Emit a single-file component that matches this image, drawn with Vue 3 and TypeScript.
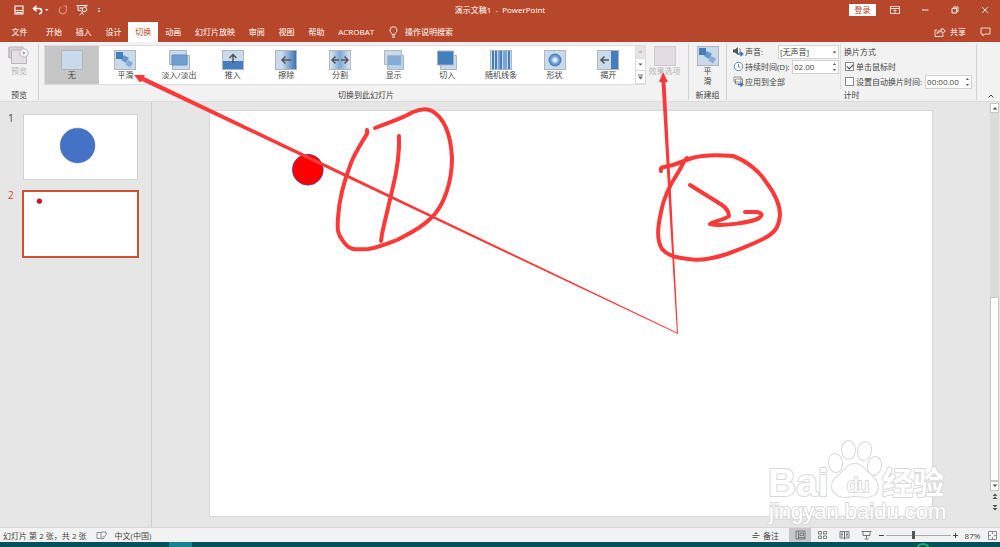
<script setup lang="ts">
import { ref } from 'vue'

const tabs: string[] = ['开始', '插入', '设计', '切换', '动画', '幻灯片放映', '审阅', '视图', '帮助', 'ACROBAT']
const activeTab = ref('切换')

interface Transition { id: string; name: string }
const transitions: Transition[] = [
  { id: 'none', name: '无' },
  { id: 'morph', name: '平滑' },
  { id: 'fade', name: '淡入/淡出' },
  { id: 'push', name: '推入' },
  { id: 'wipe', name: '擦除' },
  { id: 'split', name: '分割' },
  { id: 'reveal', name: '显示' },
  { id: 'cut', name: '切入' },
  { id: 'bars', name: '随机线条' },
  { id: 'shape', name: '形状' },
  { id: 'uncover', name: '揭开' },
]
const selected = ref('none')
const sound = ref('[无声音]')
const duration = ref('02.00')
const after = ref('00:00.00')
const onClick = ref(true)
const auto = ref(false)
const zoom = ref(42)
</script>

<template>
  <div class="app">
    <header class="head">
      <div class="titlebar">
        <div class="quick">
          <button aria-label="保存"><svg width="10" height="10" viewBox="0 0 10 10"><path d="M1 1h8v8H1zM1 5.500h8M3 9V7.500h4V9" fill="none" stroke="#fff" stroke-width="1.100" /></svg></button>
          <button class="undo" aria-label="撤消"><svg width="18" height="10" viewBox="0 0 18 10"><path d="M1.500 3.500H7c3.500 0 3.500 5 0 5.200M4.500 .8 1.500 3.500l3 2.800" fill="none" stroke="#fff" stroke-width="1.500" /><path d="M13 4h3.500l-1.700 2z" fill="#fff" /></svg></button>
          <button aria-label="恢复"><svg width="10" height="10" viewBox="0 0 10 10"><path d="M3.200 2A3.600 3.600 0 1 0 8 3.500M5.500 1H8.500V4" fill="none" stroke="#d98d7a" stroke-width="1.200" /></svg></button>
          <button aria-label="从头开始"><svg width="12" height="12" viewBox="0 0 12 12"><path d="M.5 1.500h11M2 1.500v5h3M10 1.500v2M6 7v2.500M3.500 11 6 9l2 2M3.500 4h3" fill="none" stroke="#fff" /><circle cx="8.500" cy="5.500" r="2.200" fill="#b7472a" stroke="#fff" /></svg></button>
          <button aria-label="自定义快速访问工具栏"><svg width="6" height="8" viewBox="0 0 6 8"><path d="M2 2.500h2M2 5h2L3 6z" stroke="#fff" stroke-width=".8" fill="#fff" /></svg></button>
        </div>
        <div class="title">演示文稿1&nbsp; - &nbsp;PowerPoint</div>
        <div class="window">
          <button class="login">登录</button>
          <button aria-label="功能区显示选项"><svg width="10" height="10" viewBox="0 0 10 10"><path d="M.5 1.500h9v7h-9zM.5 3.500h9M5 8V5M3.500 6 5 4.500 6.500 6" fill="none" stroke="#fff" stroke-width=".8" /></svg></button>
          <button aria-label="最小化"><svg width="10" height="10" viewBox="0 0 10 10"><path d="M2 5h6.500" stroke="#fff" stroke-width=".9" /></svg></button>
          <button aria-label="向下还原"><svg width="10" height="10" viewBox="0 0 10 10"><path d="M2 3.500h4.500V8H2zM3.500 3.500V2H8v4.500H6.500" fill="none" stroke="#fff" stroke-width=".9" /></svg></button>
          <button aria-label="关闭"><svg width="10" height="10" viewBox="0 0 10 10"><path d="m2 2 6 6M8 2 2 8" stroke="#fff" stroke-width=".9" /></svg></button>
        </div>
      </div>
      <div class="tabbar">
        <button class="file">文件</button>
        <nav class="tabs">
          <button v-for="t in tabs" :key="t" :class="{ on: t === activeTab }" @click="activeTab = t">{{ t }}</button>
        </nav>
        <button class="tell"><svg width="9" height="12" viewBox="0 0 9 12"><path d="M3 8.500C3 7 1 6 1 4.200a3.400 3.400 0 0 1 7 0C8 6 6 7 6 8.500zM3 10h3M3.500 11.500h2" fill="none" stroke="#fff" stroke-width=".9" /></svg>操作说明搜索</button>
        <button class="share"><svg width="12" height="10" viewBox="0 0 12 10"><path d="M3 3H1v6.500h8V7M3 7c0-3 2-4 5-4V1l3.500 3L8 6.500v-2C6 4.500 4 5 3 7z" fill="none" stroke="#fff" stroke-width=".8" /></svg>共享</button>
        <button class="comment" aria-label="批注"><svg width="11" height="10" viewBox="0 0 11 10"><path d="M1 1h9v6H5L3 9V7H1z" fill="none" stroke="#fff" stroke-width=".8" /></svg></button>
      </div>
    </header>

    <section class="ribbon">
      <div class="group preview">
        <button class="big dim">
          <svg width="22" height="20" viewBox="0 0 22 20"><path d="M1 1h14v11H1z" fill="#d9d3d8" stroke="#b9b5b9" /><path d="M1 1v11M3.500 4h15v13.500h-15z" fill="#e5dfe4" stroke="#b9b5b9" /><circle cx="16" cy="7" r="4.200" fill="#f6f3f5" stroke="#b9b5b9" /><path d="m14.800 5 3 2-3 2z" fill="#aaa" /></svg>
          <span>预览</span>
        </button>
        <div class="caption">预览</div>
      </div>

      <div class="group trans">
        <div class="transrow">
          <div class="gallery">
            <div class="items">
              <button v-for="t in transitions" :key="t.id" class="item" :class="{ on: t.id === selected }" @click="selected = t.id">
                <svg width="22" height="20" viewBox="0 0 22 20">
                  <defs>
                    <linearGradient id="wipeFill"><stop offset=".3" stop-color="#c9daec" /><stop offset="1" stop-color="#3a74b4" /></linearGradient>
                    <linearGradient id="splitFill"><stop offset="0" stop-color="#dbe7f4" /><stop offset=".5" stop-color="#7fa9d4" /><stop offset="1" stop-color="#dbe7f4" /></linearGradient>
                    <radialGradient id="shapeFill"><stop offset=".2" stop-color="#e3edf7" /><stop offset=".6" stop-color="#6fa0d2" /><stop offset="1" stop-color="#3f78b7" /></radialGradient>
                  </defs>
                  <rect v-if="!['fade', 'reveal', 'cut'].includes(t.id)" x=".5" y=".5" width="21" height="19" fill="#c9daec" stroke="#b1b5ba" />
                  <g v-if="t.id === 'morph'"><path d="m10 5 5 3-3 5-5-3z" fill="#6797cb" /><path d="M2 2h7v7H2z" fill="#437ebd" /><path d="m14.500 10 4.500 3-3 4.500-4.500-3z" fill="#85acd7" /></g>
                  <g v-else-if="t.id === 'fade'"><path d="M1.500.5h17v14h-17z" fill="#c9daec" stroke="#b1b5ba" /><path d="M4.500 5.500h17v14h-17z" fill="#c9daec" stroke="#b1b5ba" /><path d="M4 5h15v10H4z" fill="#709fce" stroke="#608fbe" /></g>
                  <g v-else-if="t.id === 'push'"><path d="M1 11h20v8H1z" fill="#437ebd" /><path d="M11 13V5M7.500 8 11 4.500 14.500 8" class="arrow" /></g>
                  <g v-else-if="t.id === 'wipe'"><path d="M1 1h20v18H1z" fill="url(#wipeFill)" /><path d="M16 10H7M10.500 6.500 7 10l3.500 3.500" class="arrow" /></g>
                  <g v-else-if="t.id === 'split'"><path d="M1 1h20v18H1z" fill="url(#splitFill)" /><path d="M10 10H3M6.500 6.500 3 10l3.500 3.500M12 10h7M15.500 6.500 19 10l-3.500 3.500" class="arrow" /></g>
                  <g v-else-if="t.id === 'reveal'"><path d="M1.500.5h17v14h-17z" fill="#c9daec" stroke="#b1b5ba" /><path d="M4.500 5.500h16v14h-16z" fill="#b9d0e9" stroke="#b1b5ba" /><path d="M5 6h13v9H5z" fill="#83add9" /></g>
                  <g v-else-if="t.id === 'cut'"><path d="M4.500 5.500h16v14h-16z" fill="#c9daec" stroke="#b1b5ba" /><path d="M1.500 1h16v14h-16z" fill="#437ebd" stroke="#a5b4c5" /></g>
                  <g v-else-if="t.id === 'bars'"><path d="M2 1h2v18H2zM5 1h2v18H5zM10 1h2v18h-2zM18 1h2v18h-2z" fill="#437ebd" /><path d="M8 1h2v18H8zM13 1h4v18h-4z" fill="#79a5d3" /></g>
                  <circle v-else-if="t.id === 'shape'" cx="11" cy="10" r="6.500" fill="url(#shapeFill)" />
                  <g v-else-if="t.id === 'uncover'"><path d="M14 1h7v18h-7z" fill="#437ebd" /><path d="M12 10H4M7.500 6.500 4 10l3.500 3.500" class="arrow" /></g>
                </svg>
                <span>{{ t.name }}</span>
              </button>
            </div>
            <div class="scroll">
              <button class="off" aria-label="上一行"><svg width="5" height="3" viewBox="0 0 5 3"><path d="M.5 2.500h4l-2-2z" fill="#aaa" /></svg></button>
              <button aria-label="下一行"><svg width="5" height="3" viewBox="0 0 5 3"><path d="M.5.5h4l-2 2z" fill="#555" /></svg></button>
              <button aria-label="其他"><svg width="5" height="6" viewBox="0 0 5 6"><path d="M0 .5h5v1H0zM0 2.500h5l-2.500 3z" fill="#666" /></svg></button>
            </div>
          </div>
          <button class="big dim effect">
            <svg width="22" height="20" viewBox="0 0 22 20"><rect x=".5" y=".5" width="21" height="19" fill="#e3dce2" stroke="#cfcacf" /></svg>
            <span>效果选项</span>
          </button>
        </div>
        <div class="caption">切换到此幻灯片</div>
      </div>

      <div class="group fresh">
        <button class="big">
          <svg width="22" height="20" viewBox="0 0 22 20"><rect x=".5" y=".5" width="21" height="19" fill="#c9daec" stroke="#b1b5ba" /><path d="m10 5 5 3-3 5-5-3z" fill="#6797cb" /><path d="M2 2h7v7H2z" fill="#437ebd" /><path d="m14.500 10 4.500 3-3 4.500-4.500-3z" fill="#85acd7" /></svg>
          <span>平<br>滑</span>
        </button>
        <div class="caption">新建组</div>
      </div>

      <div class="group timing">
        <div class="cols">
          <div class="col left">
            <div class="line">
              <svg width="11" height="11" viewBox="0 0 11 11"><path d="M0 3.500h2L5 1v8L2 6.500H0z" fill="#555" /><path d="M6.500 2.500c1 1.500 1 3 0 4.500" fill="none" stroke="#555" stroke-width=".8" /><path d="M5 8h4M7.500 6 9.800 8l-2.300 2" fill="none" stroke="#2f72b8" stroke-width="1.300" /></svg>
              <label for="sound">声音:</label>
              <div class="pick">
                <select id="sound" v-model="sound"><option>[无声音]</option></select>
                <svg width="5" height="3" viewBox="0 0 5 3"><path d="M.5.5h4l-2 2z" fill="#555" /></svg>
              </div>
            </div>
            <div class="line">
              <svg width="11" height="11" viewBox="0 0 11 11"><circle cx="5.500" cy="5.500" r="4.200" fill="#fff" stroke="#5d8fc9" /><path d="M5.500 3v3h2" fill="none" stroke="#666" stroke-width=".8" /></svg>
              <label for="dur">持续时间(D):</label>
              <div class="spin">
                <input id="dur" v-model="duration" type="text">
                <span class="steps"><button aria-label="增加"><svg width="3" height="2" viewBox="0 0 3 2"><path d="M0 2h3L1.500 0z" fill="#555" /></svg></button><button aria-label="减少"><svg width="3" height="2" viewBox="0 0 3 2"><path d="M0 0h3L1.500 2z" fill="#555" /></svg></button></span>
              </div>
            </div>
            <button class="line all">
              <svg width="11" height="11" viewBox="0 0 11 11"><path d="M1 1h7v5H1zM2.500 3h7v5h-7z" fill="#fff" stroke="#777" stroke-width=".8" /><path d="M5 8.500h4M7.500 6.500 9.800 8.500l-2.300 2" fill="none" stroke="#2f72b8" stroke-width="1.300" /></svg>
              <span>应用到全部</span>
            </button>
          </div>
          <div class="col right">
            <div class="line">换片方式</div>
            <div class="line"><input id="click" v-model="onClick" type="checkbox"><label for="click">单击鼠标时</label></div>
            <div class="line">
              <input id="auto" v-model="auto" type="checkbox"><label for="auto">设置自动换片时间:</label>
              <div class="spin">
                <input v-model="after" type="text" aria-label="自动换片时间">
                <span class="steps"><button aria-label="增加"><svg width="3" height="2" viewBox="0 0 3 2"><path d="M0 2h3L1.500 0z" fill="#555" /></svg></button><button aria-label="减少"><svg width="3" height="2" viewBox="0 0 3 2"><path d="M0 0h3L1.500 2z" fill="#555" /></svg></button></span>
              </div>
            </div>
          </div>
        </div>
        <div class="caption">计时</div>
      </div>
      <button class="collapse" aria-label="折叠功能区"><svg width="8" height="6" viewBox="0 0 8 6"><path d="M1.500 4.500 4 2l2.500 2.500" fill="none" stroke="#444" /></svg></button>
    </section>

    <main class="work">
      <aside class="thumbs">
        <div class="thumb">
          <span class="num">1</span>
          <button class="page" aria-label="幻灯片 1"><svg viewBox="0 0 114 64"><circle cx="54" cy="30.500" r="17.500" fill="#4472c4" stroke="#3a62a8" stroke-width=".5" /></svg></button>
        </div>
        <div class="thumb on">
          <span class="num">2</span>
          <button class="page" aria-label="幻灯片 2"><svg viewBox="0 0 114 64"><circle cx="15.500" cy="9" r="2.500" fill="#f00000" stroke="#3a4a90" stroke-width=".5" /></svg></button>
        </div>
      </aside>
      <div class="canvas">
        <div class="slide"><svg viewBox="0 0 722 407"><circle cx="96.500" cy="59" r="15.500" fill="#fe0000" stroke="#3b4f94" stroke-width=".8" /></svg></div>
      </div>
      <div class="vbar">
        <button aria-label="向上滚动"><svg width="6" height="4" viewBox="0 0 6 4"><path d="M.5 3.500h5L3 1z" fill="#555" /></svg></button>
        <div class="track"><div class="grip"></div></div>
        <button aria-label="向下滚动"><svg width="6" height="4" viewBox="0 0 6 4"><path d="M.5.5h5L3 3z" fill="#555" /></svg></button>
        <button class="jump" aria-label="上一张幻灯片"><svg width="6" height="7" viewBox="0 0 6 7"><path d="M.5 3h5L3 .5zM.5 6h5L3 3.500z" fill="#555" /></svg></button>
        <button class="jump" aria-label="下一张幻灯片"><svg width="6" height="7" viewBox="0 0 6 7"><path d="M.5 1h5L3 3.500zM.5 4h5L3 6.500z" fill="#555" /></svg></button>
      </div>
    </main>

    <footer class="status">
      <span>幻灯片 第 2 张，共 2 张</span>
      <button class="spell" aria-label="拼写检查"><svg width="11" height="9" viewBox="0 0 11 9"><path d="M5 1.500H1v6h3.500l.5.5V1.500L6 1h4v2M5 8l1-.5h2M6.500 5l1.500 1.500L10.500 3" fill="none" stroke="#777" stroke-width=".8" /></svg></button>
      <button>中文(中国)</button>
      <button class="notes"><svg width="8" height="8" viewBox="0 0 8 8"><path d="M.5 4.500h7M.5 6.500h5" stroke="#555" stroke-width=".9" /><path d="M2.500 3h3L4 1z" fill="#555" /></svg>备注</button>
      <button class="view on" aria-label="普通视图"><svg width="11" height="10" viewBox="0 0 11 10"><path d="M1 1h9v8H1zM3.500 1v8M5 3h3.500v2.500H5zM3.500 7.500H10" fill="none" stroke="#666" stroke-width=".8" /></svg></button>
      <button class="view" aria-label="幻灯片浏览"><svg width="11" height="10" viewBox="0 0 11 10"><path d="M1.500 1.500h3v2.500h-3zM6.500 1.500h3v2.500h-3zM1.500 6h3v2.500h-3zM6.500 6h3v2.500h-3z" fill="none" stroke="#666" stroke-width=".8" /></svg></button>
      <button class="view" aria-label="阅读视图"><svg width="11" height="10" viewBox="0 0 11 10"><path d="M1 1.500h4.500v6.500H1zM5.500 1.500H10v6.500H5.500zM2 3h2M2 4.500h2M2 6h2M7 3h2M7 4.500h2M7 6h2M5.500 8v1.500" fill="none" stroke="#666" stroke-width=".8" /></svg></button>
      <button class="view" aria-label="幻灯片放映"><svg width="11" height="10" viewBox="0 0 11 10"><path d="M.5 1.500h10M2 1.500v4h7v-4M5.500 5.500v3M3.500 9h4" fill="none" stroke="#666" stroke-width=".9" /></svg></button>
      <button class="sign" aria-label="缩小"><svg width="7" height="7" viewBox="0 0 7 7"><path d="M1 3.500h5" stroke="#444" /></svg></button>
      <input v-model="zoom" class="zoom" type="range" min="0" max="100" aria-label="缩放">
      <button class="sign" aria-label="放大"><svg width="7" height="7" viewBox="0 0 7 7"><path d="M1 3.500h5M3.500 1v5" stroke="#444" /></svg></button>
      <button class="pct">87%</button>
      <button class="fit" aria-label="使幻灯片适应当前窗口"><svg width="9" height="9" viewBox="0 0 9 9"><path d="M.5.5h8v8h-8zM4.500.5V3M4.500 6v2.500M.5 4.500H3M6 4.500h2.500" fill="none" stroke="#777" stroke-width=".8" /></svg></button>
    </footer>
    <div class="taskbar"><span class="running"></span><svg width="14" height="5" viewBox="0 0 14 5"><path d="M1.500 6.500a5.500 4.500 0 0 1 11 0" fill="none" stroke="#12b76a" stroke-width="2" /></svg></div>

    <svg class="overlay" viewBox="0 0 1000 547" preserveAspectRatio="none">
      <g class="mark">
        <ellipse cx="835.500" cy="463" rx="6.500" ry="9" transform="rotate(-8 835.500 463)" />
        <ellipse cx="848.500" cy="450" rx="6.500" ry="9" />
        <ellipse cx="864.500" cy="451" rx="6.500" ry="9" transform="rotate(10 864.500 451)" />
        <ellipse cx="874.500" cy="466" rx="6.500" ry="9" transform="rotate(12 874.500 466)" />
        <path d="M855 464c-8 0-11 7-17 12-7 5-8 14-2 18 6 5 12 2 19 2s14 3 20-2c5-5 3-13-3-18-6-4-9-12-17-12z" />
        <text x="768" y="496" font-size="39" font-weight="bold">Bai</text>
        <text x="847" y="492" font-size="20">du</text>
        <text x="882" y="494" font-size="31" font-weight="bold">经验</text>
        <text x="769" y="519" font-size="22">jingyan.baidu.com</text>
      </g>
      <g class="ink">
        <path d="M367 130Q368 134 365 137C359 147 354 155 351 163C344 181 339 200 338 218C337 230 338 235 343 241C349 250 354 250 368 249C377 248 389 243 397 240C408 234 420 229 430 219C445 206 452 180 452 158C451 138 446 119 432 111Q425 107 413 112C403 118 393 121 375 128" />
        <path d="M399 136C400 160 395 179 392 191L384 225 382 234 381 241" />
        <path d="M661 171Q660 167 664 167L673 165 692 158C705 154 722 155 733 156C747 161 760 172 766 182C776 195 780 206 780 215C779 227 775 233 763 239C751 245 738 250 727 254C712 259 701 261 688 259C677 258 667 255 662 249C656 239 658 226 661 212C664 195 673 180 679 171C682 166 684 160 687 158" />
        <path d="M690 185 722 205C729 210 729 214 729 216C724 220 714 221 710 224C722 227 753 222 759 218Q765 214 757 212H745" />
      </g>
      <path fill="#fb3939" d="M134 75 145 75 144 77 678 333 677.500 333.700 142 81 140 82.500z" />
      <path fill="#fb3939" d="M663 72 668 82H665.500L678 334H677L661.500 82H659z" />
    </svg>
  </div>
</template>

<style>
html, body { height: 100%; margin: 0; }
#app { height: 100vh; }
</style>

<style scoped>
.app { position: relative; height: 100vh; display: flex; flex-direction: column; overflow: hidden; background: #e6e6e6; color: #444; font: 8px/12px "Open Sans", "Noto Sans CJK SC", sans-serif; }
.app * { box-sizing: border-box; }
button, input, select { font: inherit; color: inherit; background: none; border: 0; padding: 0; margin: 0; border-radius: 0; }
button { display: flex; align-items: center; justify-content: center; white-space: nowrap; }
svg { display: block; flex: none; }

.head { background: #b7472a; color: #fff; }
.titlebar { height: 22px; display: grid; grid-template-columns: 1fr auto 1fr; align-items: start; }
.quick { display: flex; align-items: center; height: 20px; padding-left: 14px; gap: 8px; }
.title { line-height: 20px; }
.window { display: flex; justify-content: flex-end; align-items: center; height: 20px; gap: 20px; padding-right: 10px; }
.login { width: 27px; height: 12px; background: #fff; color: #b7472a; margin-right: -6px; }
.tabbar { height: 20px; display: flex; }
.file { width: 39px; }
.tabs { display: flex; width: 342px; }
.tabs button { flex: 1 1 auto; padding: 0 6px; }
.tabs .on { background: #fff; color: #b7472a; }
.tell { gap: 7px; margin-left: 8px; }
.share { margin-left: auto; gap: 4px; }
.comment { margin: 0 9px 0 14px; }

.ribbon { display: flex; height: 60px; background: #f2f2f2; border-bottom: 1px solid #dcdcdc; padding: 2px 0 1px; }
.group { display: flex; flex-direction: column; justify-content: space-between; border-right: 1px solid #d2d2d2; }
.caption { text-align: center; line-height: 10px; height: 10px; }
.big { flex-direction: column; padding-top: 2px; line-height: 10px; }
.dim { color: #b4b4b4; }
.preview { width: 39px; }
.trans { padding-left: 5px; width: 650px; }
.transrow { display: flex; align-items: flex-start; }
.gallery { display: flex; width: 602px; height: 40px; margin-top: 1px; background: #fff; border: 1px solid #dcdcdc; }
.items { flex: 1; display: grid; grid-template-columns: repeat(11, 1fr); }
.item { flex-direction: column; justify-content: flex-start; padding-top: 4px; }
.item span { line-height: 10px; }
.item.on { background: #c6c6c6; }
.arrow { fill: none; stroke: #555; stroke-width: 1.5; }
.scroll { width: 10px; display: grid; grid-template-rows: repeat(3, 1fr); }
.scroll button { border-left: 1px solid #dcdcdc; border-bottom: 1px solid #dcdcdc; }
.scroll .off { background: #e4e4e4; }
.effect { width: 37px; }
.fresh { width: 38px; }
.timing { width: 250px; }
.cols { display: flex; }
.col { display: flex; flex-direction: column; }
.left { width: 114px; padding: 0 1px 0 6px; border-right: 1px solid #dcdcdc; }
.right { padding-left: 3px; }
.line { display: flex; align-items: center; height: 15px; justify-content: flex-start; white-space: nowrap; }
.left .line > svg { margin-right: 1px; }
.pick, .left .spin { margin-left: auto; }
.pick { position: relative; width: 61px; height: 14px; }
.pick select { appearance: none; width: 100%; height: 100%; background: #fff; border: 1px solid #d2d2d2; padding-left: 1px; }
.pick svg { position: absolute; right: 2px; top: 6px; pointer-events: none; }
.spin { display: flex; width: 47px; height: 14px; background: #fff; border: 1px solid #d2d2d2; }
.spin input { flex: 1; min-width: 0; padding-left: 1px; }
.right .spin { margin-left: 3px; }
.steps { display: flex; flex-direction: column; justify-content: space-around; width: 8px; }
input[type="checkbox"] { appearance: none; width: 9px; height: 9px; margin: 0 2px 0 1px; background: #fff; border: 1px solid #8a8a8a; display: grid; place-items: center; }
input[type="checkbox"]:checked::after { content: ""; width: 5px; height: 3px; border: solid #444; border-width: 0 0 1px 1px; transform: rotate(-45deg); margin-bottom: 1px; }
.collapse { margin: auto 5px 1px auto; }

.work { flex: 1; min-height: 0; display: flex; }
.thumbs { width: 152px; padding: 11px 12px 0 8px; border-right: 1px solid #cfcfcf; display: flex; flex-direction: column; gap: 9px; }
.thumb { display: flex; align-items: flex-start; }
.num { width: 14px; font-size: 10px; line-height: 10px; }
.page { width: 118px; height: 68px; border: 2px solid #e6e6e6; background: #fff; outline: 1px solid transparent; outline-offset: -2px; }
.page svg { width: 100%; height: 100%; }
.thumb .page { outline-color: #d2d2d2; }
.on .num { color: #d24726; }
.thumb.on .page { border-color: #d0502f; outline: 0; }
.canvas { flex: 1; display: flex; padding: 8px 57px 10px; }
.slide { flex: 1; background: #fff; border: 1px solid #d6d6d6; }
.slide svg { width: 100%; height: 100%; }
.vbar { width: 10px; display: flex; flex-direction: column; padding: 1px 1px 14px 0; }
.vbar button { height: 10px; background: #fff; border: 1px solid #c6c6c6; }
.vbar .jump { border: 0; background: none; height: 11px; }
.track { flex: 1; display: flex; align-items: flex-end; background: #dcdcdc; }
.grip { width: 100%; height: 50%; background: #fff; border: 1px solid #c6c6c6; }

.status { height: 15px; display: flex; align-items: stretch; line-height: 15px; background: #f2f2f2; border-top: 1px solid #d6d6d6; padding: 0 0 0 3px; }
.spell { margin: 0 8px 0 9px; }
.notes { margin-left: auto; gap: 3px; padding-right: 10px; }
.view { width: 22px; }
.view.on { background: #c8c8c8; }
.sign { width: 9px; }
.zoom { appearance: none; width: 65px; height: 14px; background: linear-gradient(#aaa, #aaa) center / 100% 1px no-repeat; }
.zoom::-webkit-slider-thumb { appearance: none; width: 3px; height: 8px; background: #555; }
.pct { width: 25px; }
.fit { width: 15px; }
.taskbar { height: 5px; background: #04505c; display: flex; justify-content: space-between; padding: 0 70px 0 169px; }
.running { width: 23px; background: #168393; }

.overlay { position: absolute; inset: 0; width: 100%; height: 100%; pointer-events: none; }
.ink { fill: none; stroke: #fb3939; stroke-width: 4; stroke-linecap: round; stroke-linejoin: round; }
.mark { fill: #fff; stroke: #d8d8d8; stroke-width: 2; stroke-linejoin: round; paint-order: stroke; font-family: "Liberation Sans", "Noto Sans CJK SC", sans-serif; }
</style>
